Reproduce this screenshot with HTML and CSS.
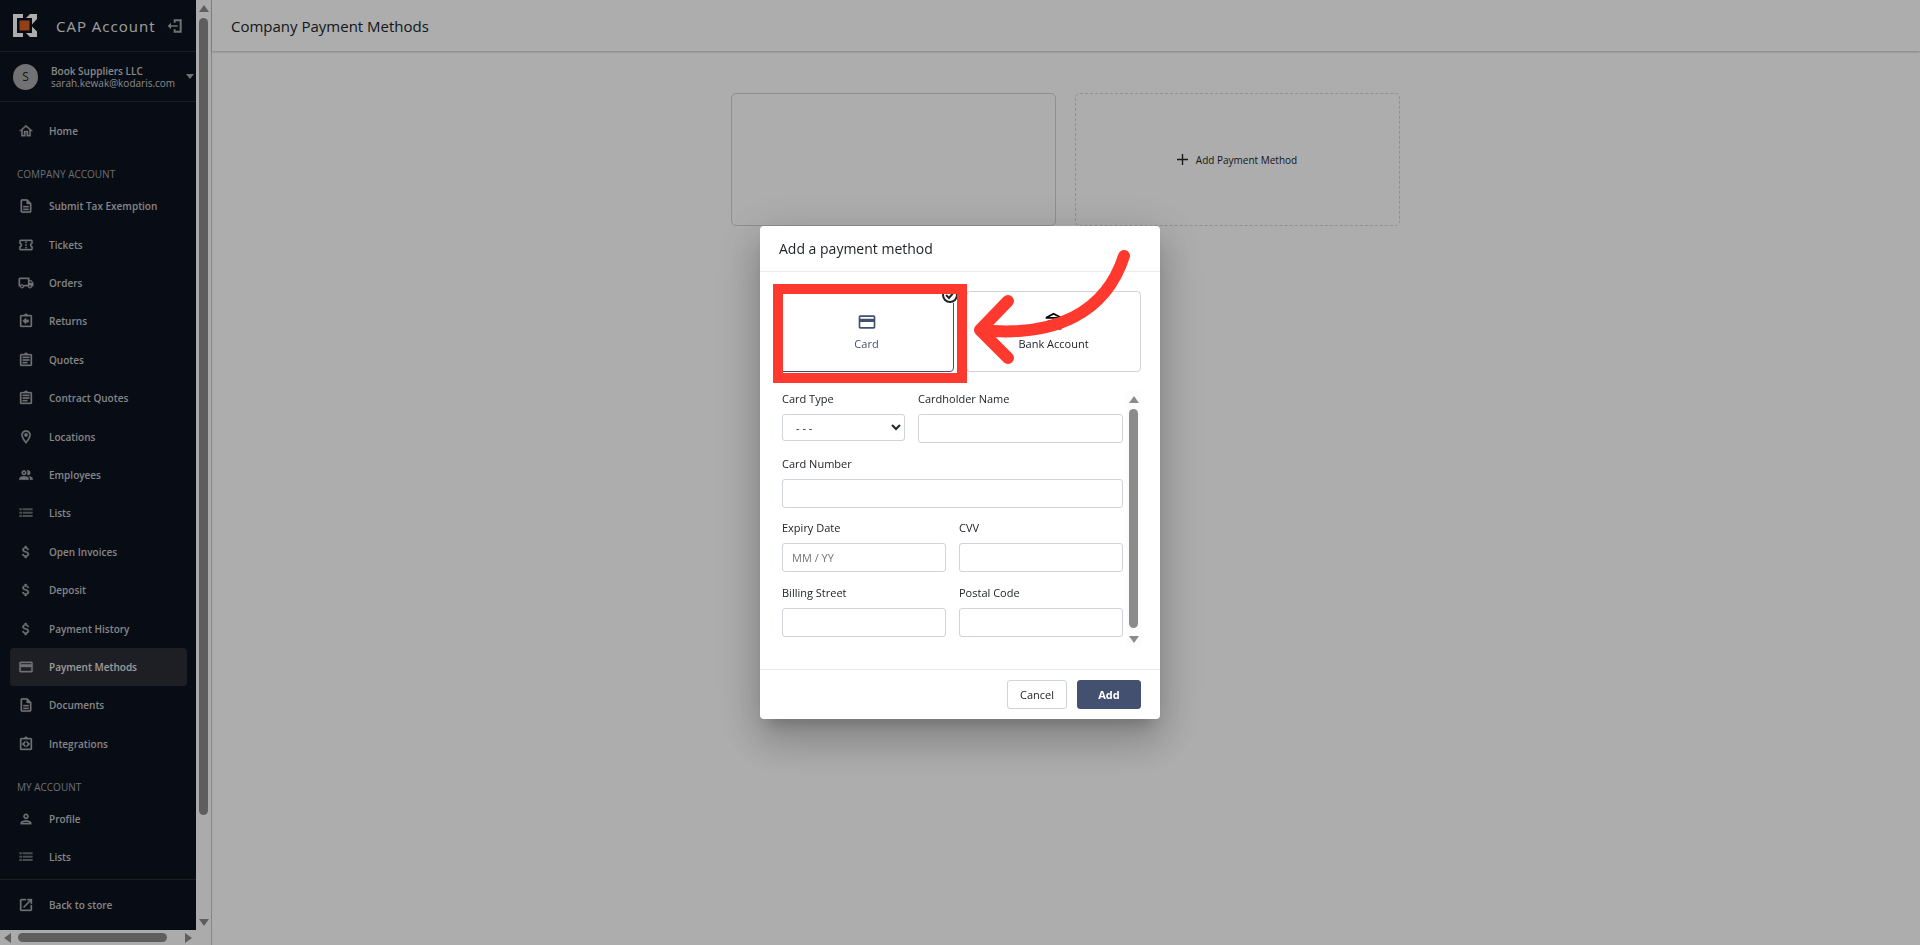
FILE: index.html
```html
<!DOCTYPE html>
<html lang="en">
<head>
  <meta charset="UTF-8">
  <meta name="viewport" content="width=device-width, initial-scale=1.0">
  <title>Company Payment Methods</title>
  <link rel="stylesheet" href="styles.css">
</head>
<body>
  <!-- Icon set -->
  <svg class="sprite" aria-hidden="true">
    <symbol id="i-home" viewBox="0 0 24 24"><path d="M12 5.69l5 4.5V18h-2v-6H9v6H7v-7.81l5-4.5M12 3L2 12h3v8h6v-6h2v6h6v-8h3L12 3z"/></symbol>
    <symbol id="i-doc" viewBox="0 0 24 24"><path d="M8 16h8v2H8zm0-4h8v2H8zm6-10H6c-1.1 0-2 .9-2 2v16c0 1.100.89 2 1.990 2H18c1.100 0 2-.9 2-2V8l-6-6zm4 18H6V4h7v5h5v11z"/></symbol>
    <symbol id="i-ticket" viewBox="0 0 24 24"><path d="M22 10V6c0-1.100-.9-2-2-2H4c-1.100 0-1.990.9-1.990 2v4c1.100 0 1.990.9 1.990 2s-.89 2-2 2v4c0 1.100.9 2 2 2h16c1.100 0 2-.9 2-2v-4c-1.100 0-2-.9-2-2s.9-2 2-2zm-2-1.460c-1.190.69-2 1.990-2 3.460s.81 2.770 2 3.460V18H4v-2.540c1.190-.69 2-1.990 2-3.460 0-1.480-.8-2.770-1.990-3.460L4 6h16v2.540zM11 15h2v2h-2zm0-4h2v2h-2zm0-4h2v2h-2z"/></symbol>
    <symbol id="i-truck" viewBox="0 0 24 24"><path d="M20 8h-3V4H3c-1.100 0-2 .9-2 2v11h2c0 1.660 1.340 3 3 3s3-1.340 3-3h6c0 1.660 1.340 3 3 3s3-1.340 3-3h2v-5l-3-4zM6 18.500c-.83 0-1.500-.67-1.500-1.500s.67-1.500 1.500-1.500 1.500.67 1.500 1.500-.67 1.500-1.500 1.500zM15 15H8.200c-1.100-1.300-3.300-1.300-4.400 0H3V6h12v9zm3 3.500c-.83 0-1.500-.67-1.500-1.500s.67-1.500 1.500-1.500 1.500.67 1.500 1.500-.67 1.500-1.500 1.500zM17 12V9.500h2.500l1.960 2.500H17z"/></symbol>
    <symbol id="i-board" viewBox="0 0 24 24"><path d="M19 3h-4.180C14.400 1.840 13.300 1 12 1s-2.400.84-2.820 2H5c-1.100 0-2 .9-2 2v14c0 1.100.9 2 2 2h14c1.100 0 2-.9 2-2V5c0-1.100-.9-2-2-2zm0 16H5V5h14v14z"/></symbol>
    <symbol id="i-pin" viewBox="0 0 24 24"><path d="M12 2C8.130 2 5 5.130 5 9c0 5.250 7 13 7 13s7-7.750 7-13c0-3.870-3.130-7-7-7zM7 9c0-2.760 2.240-5 5-5s5 2.240 5 5c0 2.880-2.880 7.190-5 9.880C9.920 16.210 7 11.850 7 9z"/><circle cx="12" cy="9" r="2.500"/></symbol>
    <symbol id="i-people" viewBox="0 0 24 24"><path d="M9 13.750c-2.340 0-7 1.170-7 3.500V19h14v-1.750c0-2.330-4.660-3.500-7-3.500zM9 12c1.930 0 3.500-1.570 3.500-3.500S10.930 5 9 5 5.500 6.570 5.500 8.500 7.070 12 9 12zm0-5c.83 0 1.500.67 1.500 1.500S9.830 10 9 10s-1.500-.67-1.500-1.500S8.170 7 9 7zm7.040 6.810c1.160.84 1.960 1.960 1.960 3.440V19h4v-1.750c0-2.020-3.500-3.170-5.960-3.440zM15 12c1.930 0 3.500-1.570 3.500-3.500S16.930 5 15 5c-.54 0-1.040.13-1.500.35.63.89 1 1.980 1 3.150s-.37 2.260-1 3.150c.46.22.96.35 1.500.35z"/></symbol>
    <symbol id="i-list" viewBox="0 0 24 24"><path d="M2 5h4v3H2zm5 0h15v3H7zM2 10h4v3H2zm5 0h15v3H7zM2 15h4v3H2zm5 0h15v3H7z"/></symbol>
    <symbol id="i-dollar" viewBox="0 0 24 24"><path d="M11.800 10.900c-2.270-.59-3-1.200-3-2.150 0-1.090 1.010-1.850 2.700-1.850 1.780 0 2.440.85 2.500 2.100h2.210c-.07-1.720-1.120-3.300-3.210-3.810V3h-3v2.160c-1.940.42-3.500 1.680-3.500 3.610 0 2.310 1.910 3.460 4.700 4.130 2.500.6 3 1.480 3 2.410 0 .69-.49 1.790-2.700 1.790-2.060 0-2.870-.92-2.980-2.100h-2.200c.12 2.190 1.760 3.420 3.680 3.830V21h3v-2.150c1.950-.37 3.500-1.500 3.500-3.550 0-2.840-2.430-3.810-4.700-4.400z"/></symbol>
    <symbol id="i-card" viewBox="0 0 24 24"><path d="M20 4H4c-1.110 0-1.990.89-1.990 2L2 18c0 1.110.89 2 2 2h16c1.110 0 2-.89 2-2V6c0-1.110-.89-2-2-2zm0 14H4v-6h16v6zm0-10H4V6h16v2z"/></symbol>
    <symbol id="i-person" viewBox="0 0 24 24"><path d="M12 6c1.100 0 2 .9 2 2s-.9 2-2 2-2-.9-2-2 .9-2 2-2m0 10c2.700 0 5.800 1.290 6 2H6c.23-.72 3.310-2 6-2m0-12C9.790 4 8 5.790 8 8s1.790 4 4 4 4-1.790 4-4-1.790-4-4-4zm0 10c-2.670 0-8 1.340-8 4v2h16v-2c0-2.660-5.330-4-8-4z"/></symbol>
    <symbol id="i-open" viewBox="0 0 24 24"><path d="M19 19H5V5h7V3H5c-1.110 0-2 .9-2 2v14c0 1.100.89 2 2 2h14c1.100 0 2-.9 2-2v-7h-2v7zM14 3v2h3.590l-9.830 9.830 1.410 1.410L19 6.410V10h2V3h-7z"/></symbol>
    <symbol id="i-exit" viewBox="0 0 24 24"><path d="M10 2h12v20H10v-5h3v2h6V5h-6v2h-3zM6 7v4h10v2H6v4l-5-5z"/></symbol>
    <symbol id="i-bank" viewBox="0 0 24 24"><path d="M6.500 10h-2v7h2v-7zm6 0h-2v7h2v-7zm8.500 9H2v2h19v-2zm-2.500-9h-2v7h2v-7zm-7-6.740L16.710 6H6.290l5.210-2.740m0-2.260L2 6v2h19V6l-9.500-5z"/></symbol>
  </svg>

  <div class="app">
    <div class="side-pane">
      <aside class="sidebar">
        <header class="brand">
          <svg class="logo" viewBox="0 0 24 24" aria-hidden="true">
            <path fill="#fff" d="M0 0h10v23H0zM17 0h7v5l-6 6.500 6 6V23h-7l-5-5V5z"/>
            <path fill="#0c1320" d="M10 0h3v23h-3zM4 4h15v15H4z"/>
            <rect x="6.500" y="6.500" width="10" height="10" fill="#d95f21"/>
          </svg>
          <span class="brand-name">CAP Account</span>
          <button class="icon-button" type="button" aria-label="Sign out"><svg class="icon-exit"><use href="#i-exit"/></svg></button>
        </header>
        <button class="account" type="button">
          <span class="avatar">S</span>
          <span class="account-text"><strong>Book Suppliers LLC</strong><span>sarah.kewak@kodaris.com</span></span>
          <span class="caret"></span>
        </button>
        <nav class="nav">
          <a class="nav-item home" href="#"><svg><use href="#i-home"/></svg>Home</a>
          <h2>COMPANY ACCOUNT</h2>
          <div class="nav-group company">
            <a class="nav-item" href="#"><svg><use href="#i-doc"/></svg>Submit Tax Exemption</a>
            <a class="nav-item" href="#"><svg><use href="#i-ticket"/></svg>Tickets</a>
            <a class="nav-item" href="#"><svg><use href="#i-truck"/></svg>Orders</a>
            <a class="nav-item" href="#"><svg viewBox="0 0 24 24"><use href="#i-board"/><path d="M16 10h-4V7l-5 5 5 5v-3h4z"/></svg>Returns</a>
            <a class="nav-item" href="#"><svg viewBox="0 0 24 24"><use href="#i-board"/><path d="M7 7h10v2H7zm0 4h10v2H7zm0 4h7v2H7z"/></svg>Quotes</a>
            <a class="nav-item" href="#"><svg viewBox="0 0 24 24"><use href="#i-board"/><path d="M7 7h10v2H7zm0 4h10v2H7zm0 4h7v2H7z"/></svg>Contract Quotes</a>
            <a class="nav-item" href="#"><svg><use href="#i-pin"/></svg>Locations</a>
            <a class="nav-item" href="#"><svg><use href="#i-people"/></svg>Employees</a>
            <a class="nav-item dim" href="#"><svg><use href="#i-list"/></svg>Lists</a>
            <a class="nav-item" href="#"><svg><use href="#i-dollar"/></svg>Open Invoices</a>
            <a class="nav-item" href="#"><svg><use href="#i-dollar"/></svg>Deposit</a>
            <a class="nav-item" href="#"><svg><use href="#i-dollar"/></svg>Payment History</a>
            <a class="nav-item active" href="#"><svg><use href="#i-card"/></svg>Payment Methods</a>
            <a class="nav-item" href="#"><svg><use href="#i-doc"/></svg>Documents</a>
            <a class="nav-item" href="#"><svg viewBox="0 0 24 24"><use href="#i-board"/><path d="M11 7v3l-2 2 2 2v3l-5-5zM13 7v3l2 2-2 2v3l5-5z"/></svg>Integrations</a>
          </div>
          <h2>MY ACCOUNT</h2>
          <div class="nav-group">
            <a class="nav-item" href="#"><svg><use href="#i-person"/></svg>Profile</a>
            <a class="nav-item dim" href="#"><svg><use href="#i-list"/></svg>Lists</a>
          </div>
        </nav>
        <footer class="side-footer">
          <a class="nav-item" href="#"><svg><use href="#i-open"/></svg>Back to store</a>
        </footer>
      </aside>
      <div class="scrollbar vertical"><i class="arrow up"></i><i class="thumb"></i><i class="arrow down"></i></div>
      <div class="scrollbar horizontal"><i class="arrow left"></i><i class="thumb"></i><i class="arrow right"></i></div>
    </div>

    <main class="main">
      <header class="topbar"><h1>Company Payment Methods</h1></header>
      <div class="methods">
        <div class="method"></div>
        <button class="method add-method" type="button">
          <svg viewBox="0 0 12 12" aria-hidden="true"><path d="M6 0v12M0 6h12"/></svg>
          <span>Add Payment Method</span>
        </button>
      </div>
    </main>
  </div>

  <div class="backdrop">
    <form class="dialog" role="dialog" aria-labelledby="dialog-title">
      <h2 class="dialog-title" id="dialog-title">Add a payment method</h2>
      <div class="dialog-body">
        <div class="types">
          <button class="type selected" type="button">
            <svg><use href="#i-card"/></svg>Card
            <svg class="check" viewBox="0 0 16 16" aria-hidden="true"><circle cx="8" cy="8" r="7"/><path d="M4 8l3 3 5-6"/></svg>
          </button>
          <button class="type" type="button"><svg><use href="#i-bank"/></svg>Bank Account</button>
          <div class="highlight"></div>
          <svg class="pointer" viewBox="0 0 156 114" aria-hidden="true"><path d="M150 6C132 62 82 88 6 80M34 51L6 80L34 108"/></svg>
        </div>
        <div class="scroll-area">
          <div class="fields">
            <div class="row name-row">
              <div class="field">
                <label for="card-type">Card Type</label>
                <select id="card-type"><option>- - -</option></select>
              </div>
              <div class="field">
                <label for="card-name">Cardholder Name</label>
                <input id="card-name" type="text">
              </div>
            </div>
            <div class="field">
              <label for="card-number">Card Number</label>
              <input id="card-number" type="text">
            </div>
            <div class="row">
              <div class="field">
                <label for="expiry">Expiry Date</label>
                <input id="expiry" type="text" placeholder="MM / YY">
              </div>
              <div class="field">
                <label for="cvv">CVV</label>
                <input id="cvv" type="text">
              </div>
            </div>
            <div class="row">
              <div class="field">
                <label for="street">Billing Street</label>
                <input id="street" type="text">
              </div>
              <div class="field">
                <label for="postal">Postal Code</label>
                <input id="postal" type="text">
              </div>
            </div>
          </div>
          <div class="scrollbar vertical"><i class="arrow up"></i><i class="thumb"></i><i class="arrow down"></i></div>
        </div>
      </div>
      <footer class="dialog-actions">
        <button class="btn" type="button">Cancel</button>
        <button class="btn primary" type="submit">Add</button>
      </footer>
    </form>
  </div>
</body>
</html>
```

FILE: styles.css
```css
* {
  box-sizing: border-box;
}
body {
  margin: 0;
  font-family: "Open Sans", "Noto Sans", sans-serif;
  font-size: 11px;
  color: #212529;
  background: #fff;
}
button, input, select {
  font: inherit;
  color: inherit;
}
button {
  cursor: pointer;
}
h1, h2 {
  margin: 0;
  font-weight: 400;
}
.sprite {
  display: none;
}
.app {
  display: flex;
  height: 100vh;
}

/* Sidebar */
.side-pane {
  display: grid;
  grid-template-columns: 196px 15px;
  grid-template-rows: 1fr 15px;
  border-right: 1px solid #c8c8c8;
  background: #fcfcfc;
}
.sidebar {
  display: flex;
  flex-direction: column;
  min-height: 0;
  background: #0c1320;
  color: #c9c9c9;
}
.brand {
  display: flex;
  align-items: center;
  height: 52px;
  padding: 0 13px;
  border-bottom: 1px solid #272d38;
}
.logo {
  width: 24px;
  height: 24px;
}
.brand-name {
  flex: 1;
  margin-left: 19px;
  font-size: 15px;
  letter-spacing: 1px;
  line-height: 20px;
  color: #e8e8e8;
  white-space: nowrap;
}
.icon-button {
  display: flex;
  padding: 0;
  border: 0;
  background: none;
}
.icon-exit {
  width: 16px;
  height: 16px;
  fill: #a5a7ab;
}
.account {
  display: flex;
  align-items: center;
  height: 50px;
  padding: 0 2px 0 13px;
  border: 0;
  border-bottom: 1px solid #272d38;
  background: none;
  text-align: left;
}
.avatar {
  width: 25px;
  height: 26px;
  border-radius: 50%;
  background: #a8a9ab;
  color: #20252e;
  font-size: 12px;
  line-height: 26px;
  text-align: center;
}
.account-text {
  display: flex;
  flex: 1;
  flex-direction: column;
  margin-left: 13px;
  font-size: 10px;
  line-height: 12px;
  white-space: nowrap;
}
.account-text strong {
  font-weight: 600;
}
.caret {
  border: 4px solid transparent;
  border-top: 5px solid #a5a7ab;
  border-bottom: 0;
}
.nav {
  flex: 1;
  min-height: 0;
  overflow: hidden;
  padding: 10px 9px 0 10px;
}
.nav h2 {
  height: 37px;
  padding: 17px 0 0 7px;
  font-size: 10px;
  line-height: 15px;
  color: #a0a2a6;
}
.nav-group {
  display: grid;
  grid-auto-rows: 38px;
}
.nav-group.company {
  height: 576px;
  grid-auto-rows: 1fr;
}
.nav-item {
  display: flex;
  align-items: center;
  gap: 15px;
  padding-left: 8px;
  border-radius: 4px;
  color: #c4c4c4;
  font-size: 10px;
  font-weight: 600;
  text-decoration: none;
}
.nav-item.home {
  height: 38px;
}
.nav-item svg {
  width: 16px;
  height: 16px;
  fill: #a5a7ab;
  stroke: #a5a7ab;
  stroke-width: 0.5;
}
.nav-item.dim svg {
  fill: #6c6f76;
  stroke: none;
}
.nav-item.active {
  background: #2c2f37;
  color: #e4e4e4;
}
.side-footer {
  display: flex;
  align-items: center;
  height: 51px;
  padding-left: 10px;
  border-top: 1px solid #2c2f37;
}

/* Scrollbars */
.scrollbar {
  display: flex;
  align-items: center;
  justify-content: space-between;
  background: #fcfcfc;
}
.scrollbar.vertical {
  flex-direction: column;
  width: 15px;
  padding: 5px 0 4px;
}
.scrollbar.horizontal {
  height: 15px;
  padding: 0 4px;
}
.thumb {
  border-radius: 5px;
  background: #8b8b8b;
}
.side-pane .vertical .thumb {
  width: 9px;
  height: 797px;
  margin: 6px 0 auto;
}
.horizontal .thumb {
  width: 149px;
  height: 9px;
  margin: 0 auto 0 7px;
}
.arrow {
  border: 0 solid transparent;
}
.arrow.up {
  border-width: 0 5px 7px;
  border-bottom-color: #8b8b8b;
}
.arrow.down {
  border-width: 7px 5px 0;
  border-top-color: #8b8b8b;
}
.arrow.left {
  border-width: 5px 7px 5px 0;
  border-right-color: #8b8b8b;
}
.arrow.right {
  border-width: 5px 0 5px 7px;
  border-left-color: #8b8b8b;
}

/* Main */
.main {
  flex: 1;
  min-width: 0;
}
.topbar {
  display: flex;
  align-items: center;
  height: 51px;
  padding-left: 19px;
  box-shadow: 0 1px 2px rgba(0,0,0,0.25);
}
.topbar h1 {
  font-size: 15px;
  line-height: 20px;
}
.methods {
  display: flex;
  justify-content: center;
  gap: 19px;
  padding: 42px 20px 0 18px;
}
.method {
  width: 325px;
  height: 133px;
  border: 1px solid #d4d4d4;
  border-radius: 5px;
  background: none;
}
.add-method {
  display: flex;
  align-items: center;
  justify-content: center;
  gap: 8px;
  border-style: dashed;
  font-size: 10px;
}
.add-method svg {
  width: 11px;
  height: 11px;
  stroke: #212529;
  stroke-width: 1.5;
}

/* Dialog */
.backdrop {
  position: fixed;
  inset: 0;
  display: flex;
  align-items: center;
  justify-content: center;
  background: rgba(0,0,0,0.32);
}
.dialog {
  width: 400px;
  border-radius: 4px;
  background: #fff;
  box-shadow: 0 11px 15px -7px rgba(0,0,0,0.2), 0 24px 38px 3px rgba(0,0,0,0.14), 0 9px 46px 8px rgba(0,0,0,0.12);
}
.dialog-title {
  height: 46px;
  padding-left: 19px;
  border-bottom: 1px solid #ebebeb;
  font-size: 14px;
  line-height: 46px;
}
.dialog-body {
  padding: 19px 19px 22px;
}
.types {
  position: relative;
  display: grid;
  grid-template-columns: 1fr 1fr;
  gap: 12px;
}
.type {
  position: relative;
  display: flex;
  flex-direction: column;
  align-items: center;
  justify-content: center;
  gap: 4px;
  height: 81px;
  border: 1px solid #ced4da;
  border-radius: 4px;
  background: #fff;
}
.type svg {
  width: 20px;
  height: 20px;
}
.type.selected {
  border-color: #435070;
  color: #435070;
  fill: #435070;
}
.type .check {
  position: absolute;
  top: -5px;
  right: -5px;
  width: 16px;
  height: 16px;
  background: #fff;
  fill: #fff;
  stroke: #212529;
  stroke-width: 2;
}
.highlight {
  position: absolute;
  top: -7px;
  left: -6px;
  width: 194px;
  height: 99px;
  border: 10px solid #ff392e;
}
.pointer {
  position: absolute;
  top: -41px;
  right: 11px;
  width: 156px;
  height: 114px;
  fill: none;
  stroke: #ff392e;
  stroke-width: 12;
  stroke-linecap: round;
  stroke-linejoin: round;
}
.scroll-area {
  display: flex;
  height: 256px;
  margin-top: 19px;
}
.fields {
  flex: 1;
  display: grid;
  grid-auto-rows: 1fr;
  height: 258px;
  padding: 0 3px;
}
.row {
  display: grid;
  grid-template-columns: 1fr 1fr;
  gap: 13px;
}
.name-row {
  grid-template-columns: 3fr 5fr;
}
.field {
  display: flex;
  flex-direction: column;
}
.field label {
  height: 23px;
  line-height: 16px;
}
.field input, .field select {
  width: 100%;
  height: 29px;
  padding: 0 9px;
  border: 1px solid #ced4da;
  border-radius: 3px;
  background: #fff;
}
.field select {
  height: 27px;
}
.field ::placeholder {
  color: #757575;
}
.scroll-area .thumb {
  width: 9px;
  flex: 1;
  margin: 6px 0 8px;
}
.dialog-actions {
  display: flex;
  justify-content: flex-end;
  gap: 10px;
  padding: 10px 19px;
  border-top: 1px solid #ebebeb;
}
.btn {
  height: 29px;
  padding: 0 12px;
  border: 1px solid #ced4da;
  border-radius: 3px;
  background: #fff;
}
.btn.primary {
  min-width: 64px;
  border-color: #435070;
  background: #435070;
  color: #fff;
  font-weight: 700;
}
```
